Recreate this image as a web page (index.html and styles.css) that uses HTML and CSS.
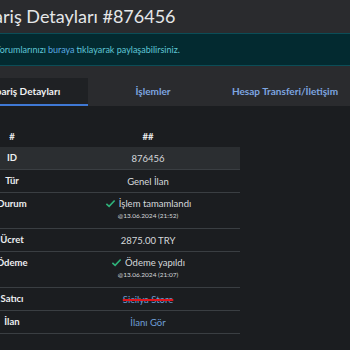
FILE: index.html
```html
<!DOCTYPE html>
<html lang="tr">
<head>
    <meta charset="UTF-8">
    <meta name="viewport" content="width=device-width, initial-scale=1.0">
    <title>Sipariş Detayları #876456</title>
    <link rel="stylesheet" href="styles.css">
</head>
<body>
    <div class="page">
        <h2 class="page-title">Sipariş Detayları #876456</h2>

        <div class="alert">
            Yorumlarınızı <a href="#">buraya</a> tıklayarak paylaşabilirsiniz.
        </div>

        <ul class="tabs">
            <li class="tab active">Sipariş Detayları</li>
            <li class="tab">İşlemler</li>
            <li class="tab">Hesap Transferi/İletişim</li>
        </ul>

        <div class="tab-content">
            <table class="details">
                <thead>
                    <tr><th class="col-key">#</th><th>##</th></tr>
                </thead>
                <tbody>
                    <tr class="striped"><th>ID</th><td>876456</td></tr>
                    <tr><th>Tür</th><td>Genel İlan</td></tr>
                    <tr class="tall">
                        <th>Durum</th>
                        <td>
                            <div class="status">
                                <svg class="check" viewBox="0 0 16 16" width="11" height="11"><path d="M2 8.6 L6 12.2 L14 3.6" fill="none" stroke="#2fb27a" stroke-width="2.4"/></svg>
                                İşlem tamamlandı
                            </div>
                            <div class="stamp">@13.06.2024 (21:52)</div>
                        </td>
                    </tr>
                    <tr><th>Ücret</th><td>2875.00 TRY</td></tr>
                    <tr class="tall">
                        <th>Ödeme</th>
                        <td>
                            <div class="status">
                                <svg class="check" viewBox="0 0 16 16" width="11" height="11"><path d="M2 8.6 L6 12.2 L14 3.6" fill="none" stroke="#2fb27a" stroke-width="2.4"/></svg>
                                Ödeme yapıldı
                            </div>
                            <div class="stamp">@13.06.2024 (21:07)</div>
                        </td>
                    </tr>
                    <tr><th>Satıcı</th><td><a class="seller" href="#">Sicilya Store</a></td></tr>
                    <tr><th>İlan</th><td><a class="link" href="#">İlanı Gör</a></td></tr>
                </tbody>
            </table>
        </div>
    </div>
</body>
</html>
```

FILE: styles.css
```css
body {
    margin: 0;
    background-color: #2a2b2e;
    color: #dee2e6;
    font-family: Lato, "Open Sans", sans-serif;
    overflow: hidden;
}

.page {
    margin-left: -32px;
    width: 420px;
}

.page-title {
    margin: 0;
    padding: 2px 0 0 2px;
    font-size: 18px;
    font-weight: 400;
    line-height: 28px;
    color: #e4e6e8;
}

/* Info alert */
.alert {
    margin-top: 3px;
    height: 31px;
    display: flex;
    align-items: center;
    padding-left: 26px;
    background-color: #032a30;
    border: 1px solid #0b4d57;
    color: #5fc6d6;
    font-size: 9px;
}

.alert a {
    color: #5aa8e0;
    text-decoration: none;
    margin: 0 2px;
}

/* Tabs */
.tabs {
    display: flex;
    margin: 12px 0 0;
    padding: 0;
    list-style: none;
    background-color: #2a2b2e;
}

.tab {
    height: 26px;
    display: flex;
    align-items: center;
    justify-content: center;
    font-size: 10px;
    font-weight: 700;
    color: #7ea6e0;
    border-bottom: 2px solid transparent;
}

.tab:nth-child(1) { width: 112px; padding-right: 8px; }
.tab:nth-child(2) { width: 130px; }
.tab:nth-child(3) { width: 134px; }

.tab.active {
    background-color: #1f2124;
    color: #f1f2f3;
    border-bottom-color: #3f78d4;
}

.tab-content {
    background-color: #1b1d20;
    padding-top: 19px;
    height: 300px;
}

/* Details table */
.details {
    border-collapse: collapse;
    width: 272px;
    font-size: 9.5px;
}

.details th,
.details td {
    text-align: center;
    padding: 0;
    height: 22px;
    border-bottom: 1px solid #3a3e42;
}

.details thead th {
    border-bottom: none;
    font-weight: 700;
    color: #e8e9ea;
}

.details .col-key {
    width: 88px;
}

.details tbody th {
    font-weight: 700;
    color: #eceef0;
    vertical-align: top;
    padding-top: 5px;
    height: 17px;
}

.details tr.tall th,
.details tr.tall td {
    height: 30px;
}

.details td {
    color: #d6d9dc;
}

.details tr.striped {
    background-color: #2b2e31;
}

.status {
    display: flex;
    align-items: center;
    justify-content: center;
    gap: 3px;
}

.stamp {
    font-size: 6.5px;
    margin-top: 3px;
    padding-bottom: 4px;
}

.link,
.seller {
    color: #6e9fd8;
    text-decoration: none;
}

.seller {
    text-decoration: line-through;
    text-decoration-color: #e0141c;
    text-decoration-thickness: 2px;
}
```
